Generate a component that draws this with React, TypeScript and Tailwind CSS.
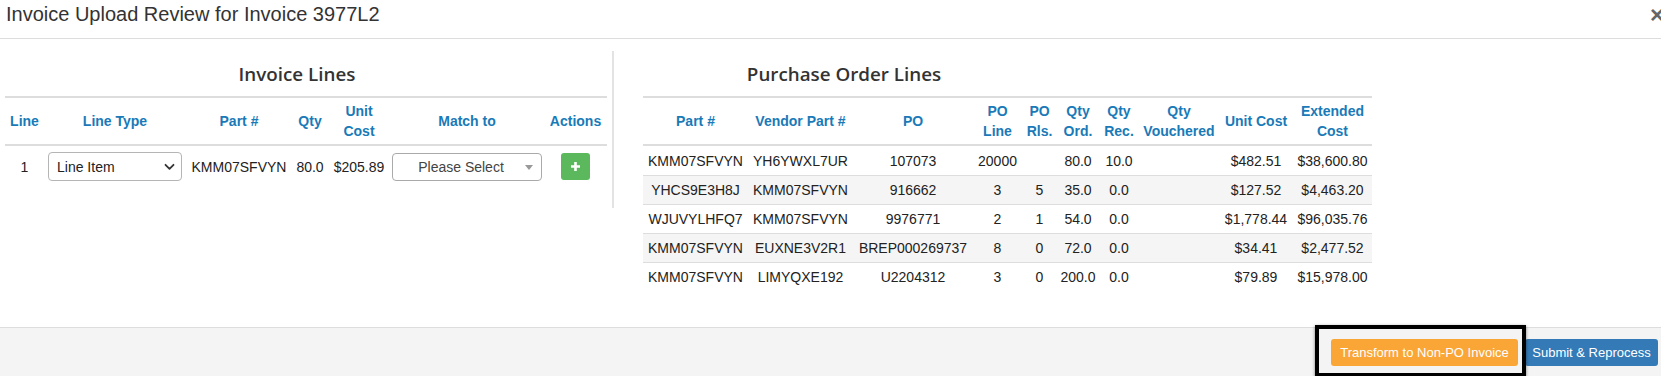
import React from "react";

const poRows: string[][] = [
  ["KMM07SFVYN", "YH6YWXL7UR", "107073", "20000", "", "80.0", "10.0", "", "$482.51", "$38,600.80"],
  ["YHCS9E3H8J", "KMM07SFVYN", "916662", "3", "5", "35.0", "0.0", "", "$127.52", "$4,463.20"],
  ["WJUVYLHFQ7", "KMM07SFVYN", "9976771", "2", "1", "54.0", "0.0", "", "$1,778.44", "$96,035.76"],
  ["KMM07SFVYN", "EUXNE3V2R1", "BREP000269737", "8", "0", "72.0", "0.0", "", "$34.41", "$2,477.52"],
  ["KMM07SFVYN", "LIMYQXE192", "U2204312", "3", "0", "200.0", "0.0", "", "$79.89", "$15,978.00"],
];

const poWidths = [
  "w-[105px]",
  "w-[105px]",
  "w-[120px]",
  "w-[49px]",
  "w-[35px]",
  "w-[42px]",
  "w-[40px]",
  "w-[80px]",
  "w-[74px]",
  "w-[79px]",
];

const poHeaders: React.ReactNode[] = [
  "Part #",
  "Vendor Part #",
  "PO",
  <>PO<br />Line</>,
  <>PO<br />Rls.</>,
  <>Qty<br />Ord.</>,
  <>Qty<br />Rec.</>,
  <>Qty<br />Vouchered</>,
  "Unit Cost",
  <>Extended<br />Cost</>,
];

function Th({ w, children }: { w: string; children: React.ReactNode }) {
  return (
    <div className={`${w} shrink-0 flex items-center justify-center text-center font-bold text-[14px] leading-[20px] text-[#1a7ab8]`}>
      {children}
    </div>
  );
}

export default function App() {
  return (
    <div className="w-[1661px] h-[376px] bg-white relative overflow-hidden font-['Liberation_Sans',Arial,sans-serif] text-[#222]">
      {/* Header */}
      <div className="h-[39px] border-b border-[#dddddd] flex justify-between items-start pl-[6px]">
        <div className="pt-[3px] text-[20px] leading-[22px] text-[#333]">
          Invoice Upload Review for Invoice 3977L2
        </div>
        <div className="-mr-[3px] mt-[2px] text-[24px] leading-[26px] font-bold text-[#666]">×</div>
      </div>

      {/* Body */}
      <div className="h-[288px] flex">
        {/* Left panel */}
        <div className="ml-[5px] w-[602px] shrink-0">
          <div className="mt-[23px] h-[24px] w-[584px] text-center font-['Open_Sans',sans-serif] font-semibold text-[18.8px] leading-[24px] text-[#333]">
            Invoice Lines
          </div>
          <div className="mt-[10px]">
            <div className="flex h-[50px] border-y-2 border-[#dddddd]">
              <Th w="w-[39px]">Line</Th>
              <Th w="w-[142px]">Line Type</Th>
              <Th w="w-[106px]">Part #</Th>
              <Th w="w-[36px]">Qty</Th>
              <Th w="w-[62px]">Unit<br />Cost</Th>
              <Th w="w-[154px]">Match to</Th>
              <Th w="w-[63px]">Actions</Th>
            </div>
            <div className="flex h-[41px] items-center text-[14px] leading-[20px]">
              <div className="w-[39px] shrink-0 text-center">1</div>
              <div className="w-[142px] shrink-0 flex justify-center">
                <div className="w-[134px] h-[29px] border border-[#b5b5b5] rounded-[4px] bg-white flex items-center justify-between pl-[8px] pr-[6px]">
                  <span className="text-[14px] text-[#222]">Line Item</span>
                  <svg width="11" height="8" viewBox="0 0 11 8" fill="none">
                    <path d="M1.5 1.8 L5.5 5.8 L9.5 1.8" stroke="#333" strokeWidth="1.8" strokeLinecap="round" strokeLinejoin="round" />
                  </svg>
                </div>
              </div>
              <div className="w-[106px] shrink-0 text-center">KMM07SFVYN</div>
              <div className="w-[36px] shrink-0 text-center">80.0</div>
              <div className="w-[62px] shrink-0 text-center whitespace-nowrap">$205.89</div>
              <div className="w-[154px] shrink-0 flex justify-center">
                <div className="w-[150px] h-[28px] border border-[#aaaaaa] rounded-[4px] bg-white relative flex items-center justify-center">
                  <span className="text-[14px] text-[#444] -ml-[12px]">Please Select</span>
                  <span className="absolute right-[8px] top-[11px] w-0 h-0 border-l-[4px] border-r-[4px] border-t-[5px] border-l-transparent border-r-transparent border-t-[#999]" />
                </div>
              </div>
              <div className="w-[63px] shrink-0 flex justify-center">
                <div className="w-[29px] h-[27px] rounded-[3px] bg-[#5cb85c] flex items-center justify-center">
                  <svg width="11" height="11" viewBox="0 0 11 11">
                    <path d="M5.5 1 V10 M1 5.5 H10" stroke="#fff" strokeWidth="2.6" />
                  </svg>
                </div>
              </div>
            </div>
          </div>
        </div>

        {/* Divider */}
        <div className="ml-[5px] mt-[12px] w-[2px] h-[157px] bg-[#e3e3e3] shrink-0" />

        {/* Right panel */}
        <div className="ml-[29px] w-[729px] shrink-0">
          <div className="mt-[23px] h-[24px] w-[402px] text-center font-['Open_Sans',sans-serif] font-semibold text-[18.8px] leading-[24px] text-[#333]">
            Purchase Order Lines
          </div>
          <div className="mt-[10px]">
            <div className="flex h-[50px] border-y-2 border-[#dddddd]">
              {poHeaders.map((h, i) => (
                <Th key={i} w={poWidths[i]}>
                  {h}
                </Th>
              ))}
            </div>
            {poRows.map((row, r) => (
              <div
                key={r}
                className={`flex h-[29px] items-center text-[14px] leading-[20px] ${r > 0 ? "border-t border-[#dddddd]" : ""} ${r % 2 === 1 ? "bg-[#f5f5f5]" : ""}`}
              >
                {row.map((c, i) => (
                  <div key={i} className={`${poWidths[i]} shrink-0 text-center whitespace-nowrap`}>
                    {c}
                  </div>
                ))}
              </div>
            ))}
          </div>
        </div>
      </div>

      {/* Footer */}
      <div className="h-[49px] border-t border-[#dddddd] bg-[#f4f4f4] flex justify-end items-start pt-[11px] pr-[3px] gap-[7px]">
        <div className="relative">
          <div className="w-[187px] h-[27px] rounded-[3px] bg-[#f9a637] text-white text-[13px] leading-[27px] text-center whitespace-nowrap">
            Transform to Non-PO Invoice
          </div>
          <div className="absolute left-[-16px] top-[-14px] w-[211px] h-[52px] border-[4px] border-black shadow-[0_1px_3px_rgba(0,0,0,0.5)] pointer-events-none" />
        </div>
        <div className="w-[133px] h-[27px] rounded-[3px] bg-[#337ab7] text-white text-[13px] leading-[27px] text-center whitespace-nowrap">
          Submit &amp; Reprocess
        </div>
      </div>
    </div>
  );
}
